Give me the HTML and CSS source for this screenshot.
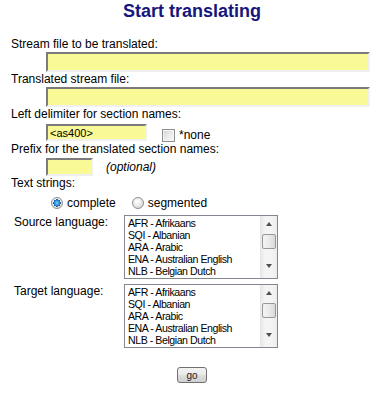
FILE: index.html
```html
<!DOCTYPE html>
<html>
<head>
<meta charset="utf-8">
<link rel="stylesheet" href="styles.css">
</head>
<body>
<div class="page">
  <h1 class="title">Start translating</h1>
  <div class="form">
    <div class="label">Stream file to be translated:</div>
    <div class="field f1"><input class="inp wide" type="text"></div>
    <div class="label">Translated stream file:</div>
    <div class="field f2"><input class="inp wide" type="text"></div>
    <div class="label">Left delimiter for section names:</div>
    <div class="field f3">
      <input class="inp delim" type="text" value="<as400>">
      <span class="check"></span><span class="none">*none</span>
    </div>
    <div class="label l4">Prefix for the translated section names:</div>
    <div class="field f4">
      <input class="inp prefix" type="text"><span class="opt">(optional)</span>
    </div>
    <div class="label">Text strings:</div>
    <div class="radios">
      <span class="radio on"></span><span class="rlabel">complete</span>
      <span class="radio r2"></span><span class="rlabel">segmented</span>
    </div>
    <div class="langrow">
      <div class="langlabel">Source language:</div>
      <div class="listbox">
        <div class="items">
          <div>AFR - Afrikaans</div>
          <div>SQI - Albanian</div>
          <div>ARA - Arabic</div>
          <div>ENA - Australian English</div>
          <div>NLB - Belgian Dutch</div>
        </div>
        <div class="sbar">
          <span class="arrow up"></span>
          <span class="thumb"></span>
          <span class="arrow down"></span>
        </div>
      </div>
    </div>
    <div class="langrow">
      <div class="langlabel">Target language:</div>
      <div class="listbox">
        <div class="items">
          <div>AFR - Afrikaans</div>
          <div>SQI - Albanian</div>
          <div>ARA - Arabic</div>
          <div>ENA - Australian English</div>
          <div>NLB - Belgian Dutch</div>
        </div>
        <div class="sbar">
          <span class="arrow up"></span>
          <span class="thumb"></span>
          <span class="arrow down"></span>
        </div>
      </div>
    </div>
  </div>
  <div class="btnrow"><button class="go" type="button">go</button></div>
</div>
</body>
</html>
```

FILE: styles.css
```css
html, body {
  margin: 0;
  padding: 0;
  background: #ffffff;
}
body {
  font-family: "Liberation Sans", Arial, sans-serif;
  font-size: 12px;
  color: #000;
}
.page {
  width: 378px;
}
.title {
  margin: 0 0 0 6px;
  height: 37px;
  font-size: 18px;
  line-height: 22px;
  font-weight: bold;
  color: #16167c;
  text-align: center;
}
.form {
  padding-left: 11px;
}
.label {
  height: 15px;
  line-height: 15px;
  white-space: nowrap;
}
.l4 {
  margin-top: 1px;
}
.field {
  display: flex;
  align-items: center;
  padding-left: 35px;
}
.inp {
  box-sizing: border-box;
  margin: 0;
  padding: 0 0 0 2px;
  background: #f9f995;
  border-style: solid;
  border-width: 2px 2px 2px 2px;
  border-color: #7b7b7b #f0f0f0 #f0f0f0 #7b7b7b;
  outline: none;
  font-family: "Liberation Sans", Arial, sans-serif;
  font-size: 11px;
  color: #000;
}
.wide {
  width: 324px;
  height: 20px;
}
.f3 {
  margin-top: 2px;
  height: 17px;
}
.delim {
  width: 101px;
  height: 17px;
}
.check {
  box-sizing: border-box;
  width: 13px;
  height: 13px;
  margin: 6px 0 0 15px;
  border: 1px solid #8f8f8f;
  background: linear-gradient(135deg, #d4d4d4 0%, #eeeeee 60%, #fbfbfb 100%);
  box-shadow: inset 0 0 0 1px #f4f4f4;
}
.none {
  margin: 5px 0 0 4px;
  font-size: 12px;
}
.f4 {
  margin-top: 1px;
  height: 18px;
}
.prefix {
  width: 47px;
  height: 18px;
}
.opt {
  margin-left: 13px;
  font-style: italic;
}
.radios {
  display: flex;
  align-items: center;
  height: 15px;
  margin-top: 4px;
  padding-left: 40px;
}
.radio {
  box-sizing: border-box;
  width: 12px;
  height: 12px;
  border-radius: 50%;
  border: 1px solid #8e8f8f;
  background: radial-gradient(circle at 40% 35%, #ffffff 0%, #e6e6e6 55%, #c9c9c9 100%);
  margin-top: 1px;
}
.radio.on {
  background:
    radial-gradient(circle at 50% 50%, #7fd0f4 0px, #2a8ad4 2.5px, #1a5fa8 3.6px, transparent 3.8px),
    radial-gradient(circle at 40% 35%, #ffffff 0%, #e6e6e6 55%, #c9c9c9 100%);
}
.rlabel {
  margin-left: 4px;
}
.r2 {
  margin-left: 16px;
}
.langrow {
  display: flex;
  align-items: flex-start;
  margin-top: 5px;
}
.langlabel {
  width: 110px;
  padding-left: 3px;
  line-height: 15px;
  white-space: nowrap;
}
.listbox {
  box-sizing: border-box;
  width: 154px;
  height: 64px;
  border: 1px solid #828790;
  display: flex;
  background: #fff;
}
.items {
  flex: 1;
  padding: 1px 0 0 3px;
  font-family: "Liberation Sans", Tahoma, sans-serif;
  font-size: 10.6px;
  letter-spacing: -0.45px;
  line-height: 12px;
  white-space: nowrap;
  overflow: hidden;
  color: #000;
}
.sbar {
  width: 17px;
  height: 62px;
  background: linear-gradient(to right, #e6e6e6, #f4f4f4 30%, #f4f4f4 70%, #ececec);
  display: flex;
  flex-direction: column;
  align-items: center;
}
.arrow {
  width: 0;
  height: 0;
  border-left: 3.5px solid transparent;
  border-right: 3.5px solid transparent;
}
.arrow.up {
  margin-top: 6px;
  border-bottom: 4px solid #4f4f4f;
}
.thumb {
  box-sizing: border-box;
  width: 14px;
  height: 15px;
  margin-top: 8px;
  border: 1px solid #979797;
  border-radius: 2px;
  background: linear-gradient(to right, #f4f4f4, #eaeaea 50%, #d9d9d9);
}
.arrow.down {
  margin-top: 15px;
  border-top: 4px solid #4f4f4f;
}
.btnrow {
  padding-left: 6px;
  text-align: center;
  margin-top: 19px;
}
.go {
  box-sizing: border-box;
  width: 30px;
  height: 16px;
  margin: 0;
  padding: 0;
  border: 1px solid #707070;
  border-radius: 3px;
  background: linear-gradient(to bottom, #f2f2f2 0%, #ebebeb 45%, #dddddd 55%, #cfcfcf 100%);
  font-family: "Liberation Sans", Tahoma, sans-serif;
  font-size: 10px;
  line-height: 13px;
  color: #1a1a1a;
}
```
